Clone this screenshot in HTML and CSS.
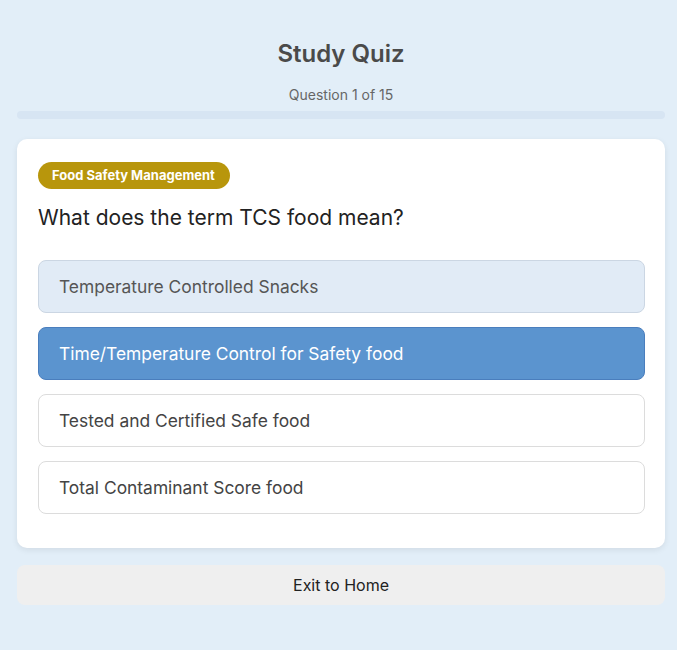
FILE: index.html
```html
<!DOCTYPE html>
<html lang="en">
<head>
  <meta charset="UTF-8">
  <meta name="viewport" content="width=device-width, initial-scale=1.0">
  <title>Study Quiz</title>
  <link rel="stylesheet" href="styles.css">
</head>
<body>

  <main class="quiz-page">
    <!-- Header -->
    <header class="quiz-header">
      <h1>Study Quiz</h1>
      <p class="quiz-count">Question 1 of 15</p>
      <div class="progress-track">
        <div class="progress-fill" style="width: 0%"></div>
      </div>
    </header>

    <!-- Question Card -->
    <section class="question-card">
      <span class="category-badge">Food Safety Management</span>
      <h2 class="question-text">What does the term TCS food mean?</h2>

      <div class="options">
        <button class="option hovered">Temperature Controlled Snacks</button>
        <button class="option selected">Time/Temperature Control for Safety food</button>
        <button class="option">Tested and Certified Safe food</button>
        <button class="option">Total Contaminant Score food</button>
      </div>
    </section>

    <button class="exit-btn">Exit to Home</button>
  </main>

</body>
</html>
```

FILE: styles.css
```css
/* General Styles */
body {
  font-family: Inter, "Open Sans", sans-serif;
  margin: 0;
  padding: 0;
  background-color: #e2eef8;
  color: #333;
}

.quiz-page {
  width: 648px;
  margin-left: 17px;
  padding-top: 39px;
}

/* Header */
.quiz-header {
  text-align: center;
}

.quiz-header h1 {
  margin: 0;
  font-size: 24px;
  font-weight: 600;
  color: #4a4a4a;
  line-height: 30px;
}

.quiz-count {
  margin: 17px 0 7px;
  font-size: 14px;
  color: #666;
  line-height: 18px;
}

.progress-track {
  height: 8px;
  background-color: #d7e5f3;
  border-radius: 4px;
  overflow: hidden;
}

.progress-fill {
  height: 100%;
  background-color: #5b94cf;
}

/* Question Card */
.question-card {
  margin-top: 20px;
  background: #fff;
  border-radius: 10px;
  padding: 23px 20px 20px 21px;
  box-shadow: 0 2px 6px rgba(0, 0, 0, 0.08);
}

.category-badge {
  display: inline-block;
  background-color: #b8960c;
  color: #fff;
  font-size: 13px;
  font-weight: 700;
  padding: 0 15px 0 14px;
  line-height: 27px;
  border-radius: 14px;
}

.question-text {
  margin: 16px 0 29px;
  font-size: 21px;
  font-weight: 400;
  color: #222;
  line-height: 26px;
}

.options {
  display: flex;
  flex-direction: column;
  gap: 14px;
  padding-bottom: 14px;
}

.option {
  display: block;
  width: 100%;
  height: 53px;
  text-align: left;
  padding: 0 20px;
  font-family: inherit;
  font-size: 17.4px;
  color: #444;
  background: #fff;
  border: 1px solid #dcdcdc;
  border-radius: 8px;
  cursor: pointer;
}

.option.hovered {
  background-color: #e1ebf6;
  border-color: #cbd6e3;
  color: #555;
}

.option.selected {
  background-color: #5b94cf;
  border-color: #4a7ebd;
  color: #fff;
}

.exit-btn {
  display: block;
  width: 100%;
  margin-top: 17px;
  height: 40px;
  font-family: inherit;
  font-size: 16px;
  color: #222;
  background-color: #efefef;
  border: none;
  border-radius: 8px;
  cursor: pointer;
}
```
